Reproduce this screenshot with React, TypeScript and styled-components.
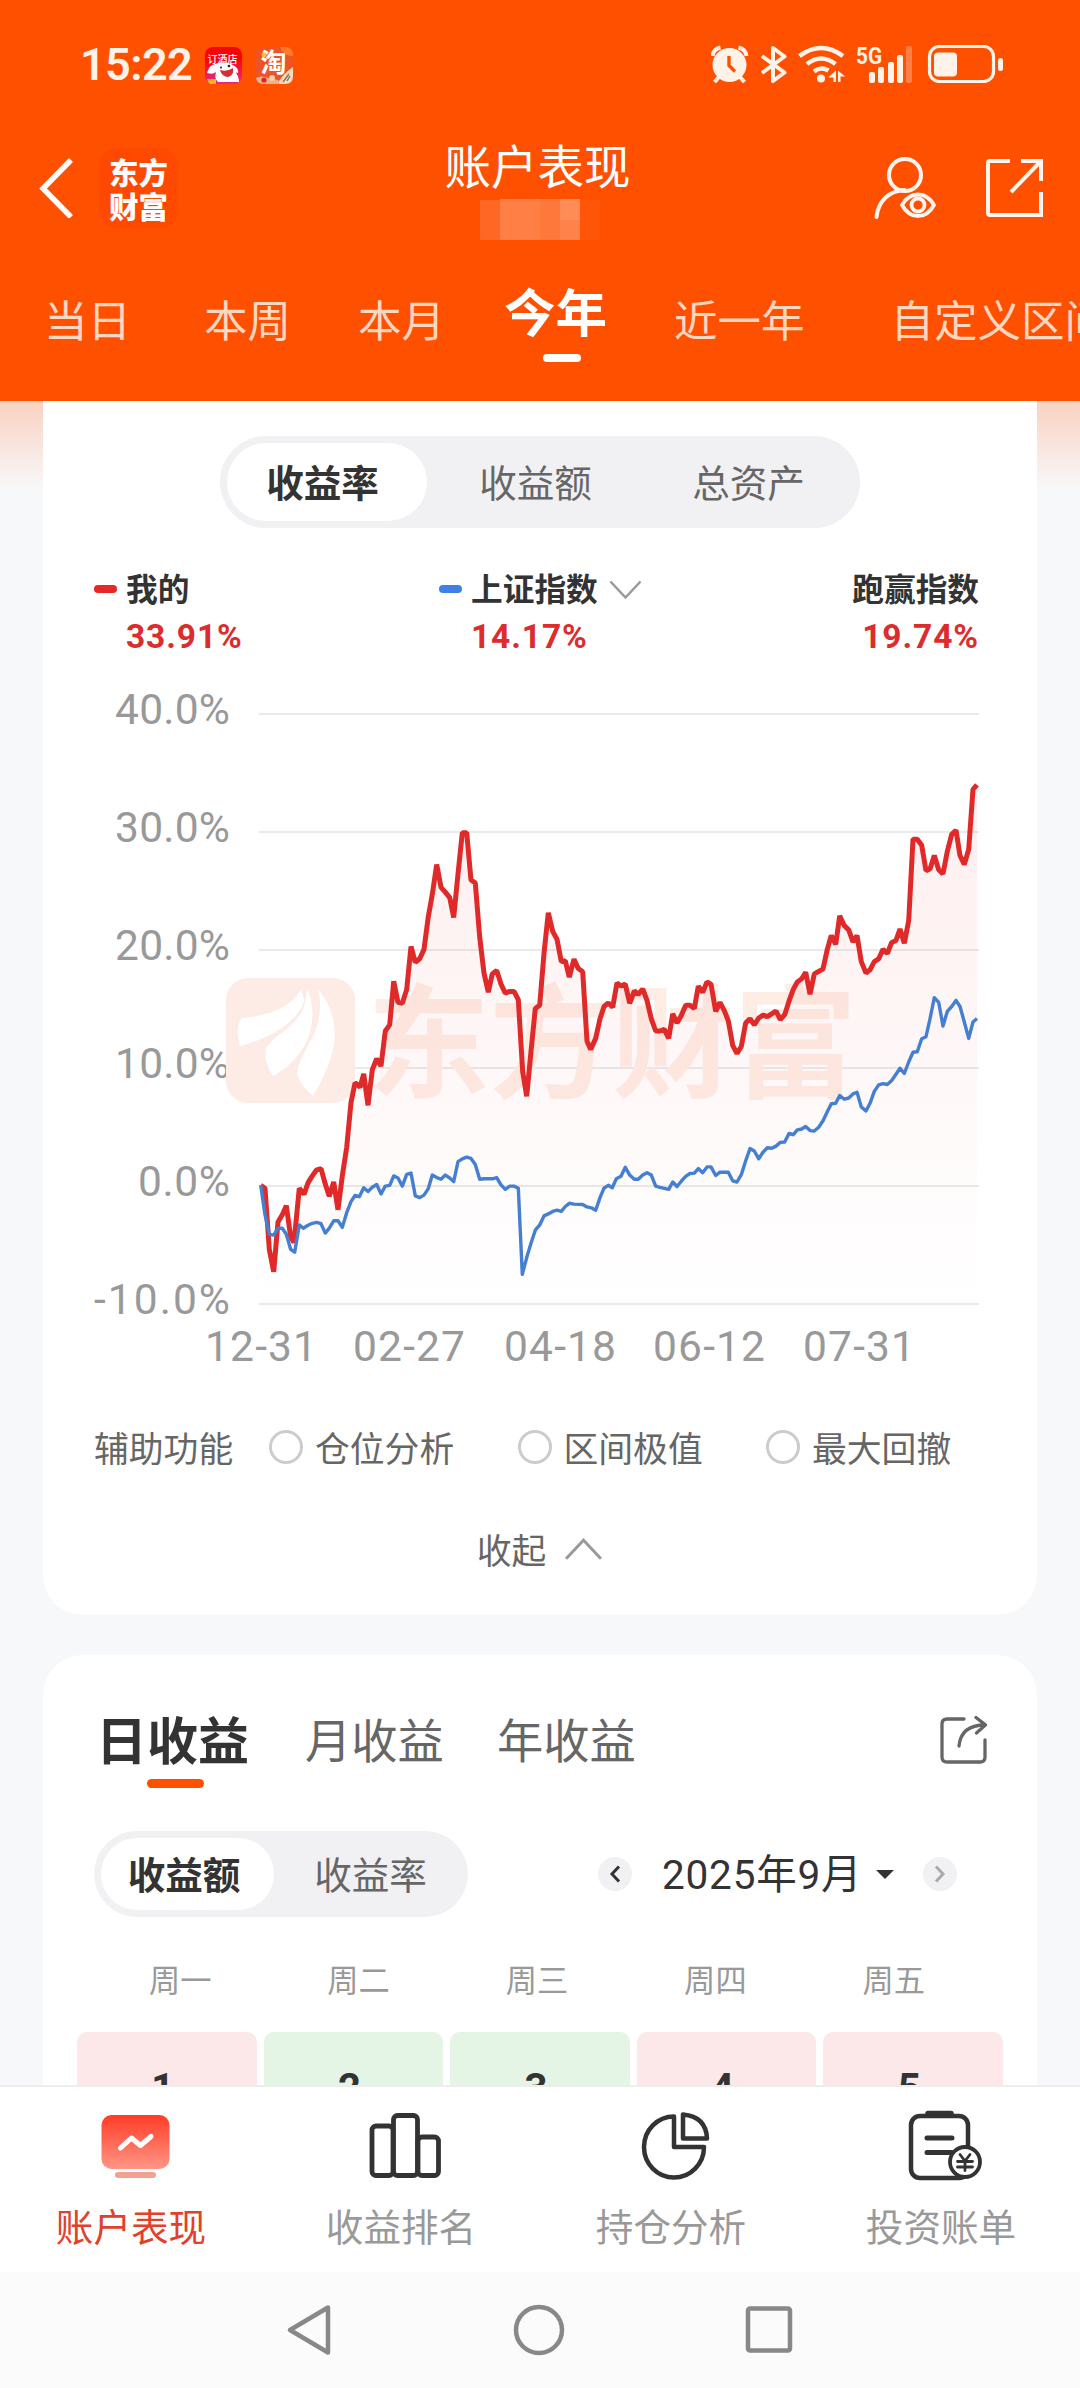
import React from "react";
import styled, { createGlobalStyle } from "styled-components";

const GlobalStyle = createGlobalStyle`
  body { margin: 0; background: #f7f8fa; }
  *, *::before, *::after { box-sizing: border-box; }
  svg { display: block; flex: none; }
`;

const cjk = `"Noto Sans CJK SC", sans-serif`;
const digits = `Roboto, "Noto Sans CJK SC", sans-serif`;

const Screen = styled.div`
  width: 1080px;
  height: 2388px;
  display: flex;
  flex-direction: column;
  overflow: hidden;
  background: #f7f8fa;
  font-family: ${cjk};
  color: #333;
  white-space: nowrap;
`;

/* ---------- header ---------- */

const Header = styled.header`
  flex: none;
  height: 401px;
  background: #ff5000;
  color: #fff;
`;

const StatusBar = styled.div`
  height: 108px;
  padding: 20px 77px 0 80px;
  display: flex;
  align-items: center;
  color: #fff2e8;
`;

const Clock = styled.span`
  width: 125px;
  padding-top: 2px;
  font: 600 45px/50px ${digits};
  letter-spacing: -0.6px;
`;

const AppBadges = styled.div`
  display: flex;
  gap: 14px;
  margin-top: 2px;
`;

const StatusIcons = styled.div`
  margin-left: auto;
  display: flex;
  align-items: center;
`;

const TitleBar = styled.div`
  height: 160px;
  padding: 0 36px;
  display: grid;
  grid-template-columns: 1fr auto 1fr;
  align-items: center;
`;

const TitleLeft = styled.div`
  padding-left: 3px;
  display: flex;
  align-items: center;
  gap: 26px;
`;

const BrandLogo = styled.div`
  width: 79px;
  height: 80px;
  border-radius: 18px;
  background: #ff4800;
  display: grid;
  place-content: center;
  font-size: 29.5px;
  font-weight: 900;
  line-height: 34px;
`;

const TitleCenter = styled.div`
  display: flex;
  flex-direction: column;
  align-items: center;
`;

const Title = styled.h1`
  margin: 0;
  padding: 0 5px 7px 0;
  font-size: 46.5px;
  font-weight: 400;
  line-height: 55px;
`;

const TitleRight = styled.div`
  display: flex;
  justify-content: flex-end;
  align-items: center;
  gap: 50px;
`;

const PeriodTabs = styled.nav`
  height: 133px;
  padding-left: 44px;
  display: flex;
  align-items: flex-start;
  overflow: hidden;
`;

const PeriodTab = styled.div<{ $gap: number; $active?: boolean }>`
  flex: none;
  margin-left: ${(p) => p.$gap}px;
  padding-top: ${(p) => (p.$active ? 10 : 19)}px;
  display: flex;
  flex-direction: column;
  align-items: center;
  color: ${(p) => (p.$active ? "#fff" : "#ffd6c0")};
  font-size: ${(p) => (p.$active ? 51.5 : 43.5)}px;
  font-weight: ${(p) => (p.$active ? 700 : 400)};
  line-height: 64px;
  &::after {
    content: "";
    display: ${(p) => (p.$active ? "block" : "none")};
    width: 38px;
    height: 8px;
    margin: 12px 0 0 12px;
    border-radius: 4px;
    background: #fff;
  }
`;

/* ---------- scrolling content ---------- */

const Content = styled.main`
  flex: 1;
  min-height: 0;
  overflow: hidden;
  padding: 0 43px;
  background: linear-gradient(#fad1c0, #f7f8fa 88px);
`;

const Card = styled.section<{ $top?: boolean }>`
  background: #fff;
  border-radius: ${(p) => (p.$top ? "0 0 40px 40px" : "40px 40px 0 0")};
  height: ${(p) => (p.$top ? "1214px" : "700px")};
  margin-bottom: 40px;
  overflow: hidden;
`;

const Segmented = styled.div<{ $w: number; $h: number }>`
  width: ${(p) => p.$w}px;
  height: ${(p) => p.$h}px;
  padding: 7px;
  border-radius: 46px;
  background: #f1f1f4;
  display: flex;
`;

const Segment = styled.div<{ $w: number; $shift: number; $active?: boolean }>`
  width: ${(p) => p.$w}px;
  padding: 0 ${(p) => Math.max(0, p.$shift)}px 3px ${(p) => Math.max(0, -p.$shift)}px;
  border-radius: 40px;
  display: flex;
  align-items: center;
  justify-content: center;
  font-size: 37.6px;
  font-weight: ${(p) => (p.$active ? 700 : 400)};
  color: ${(p) => (p.$active ? "#333" : "#666")};
  background: ${(p) => (p.$active ? "#fff" : "none")};
`;

const ChartSwitch = styled.div`
  padding-top: 35px;
  display: flex;
  justify-content: center;
`;

const Legend = styled.div`
  height: 99px;
  margin-top: 37px;
  padding: 0 58px 0 51px;
  display: flex;
`;

const LegendItem = styled.div<{ $w?: number; $end?: boolean }>`
  width: ${(p) => (p.$w ? p.$w + "px" : "auto")};
  margin-left: ${(p) => (p.$end ? "auto" : 0)};
  display: flex;
  flex-direction: column;
  align-items: ${(p) => (p.$end ? "flex-end" : "flex-start")};
`;

const LegendName = styled.div`
  height: 46px;
  padding-bottom: 2px;
  display: flex;
  align-items: center;
  font-size: 31.7px;
  font-weight: 700;
  svg {
    margin: 6px 0 0 11px;
  }
`;

const Marker = styled.i<{ $color: string }>`
  width: 23px;
  height: 8px;
  margin: 3px 9px 0 0;
  border-radius: 4px;
  background: ${(p) => p.$color};
`;

const LegendValue = styled.div<{ $indent?: boolean }>`
  margin-left: ${(p) => (p.$indent ? 32 : 0)}px;
  height: 46px;
  font: 700 33.5px/52px ${digits};
  letter-spacing: 0.9px;
  color: #dd2c2c;
`;

const Helpers = styled.div`
  height: 60px;
  padding-left: 51px;
  margin-top: 34px;
  display: flex;
  align-items: center;
  font-size: 34.8px;
  color: #666;
`;

const HelperLabel = styled.span`
  width: 175px;
`;

const HelperOption = styled.label`
  width: 248.5px;
  display: flex;
  align-items: center;
  gap: 12px;
  &::before {
    content: "";
    width: 34px;
    height: 34px;
    border: 3px solid #ccc;
    border-radius: 50%;
  }
`;

const Collapse = styled.div`
  margin-top: 42px;
  height: 60px;
  display: flex;
  justify-content: center;
  align-items: center;
  gap: 18px;
  font-size: 34.8px;
  color: #666;
`;

/* ---------- profit calendar ---------- */

const ProfitTabs = styled.div`
  height: 176px;
  padding: 53px 50px 0 53px;
  display: flex;
`;

const ProfitTab = styled.div<{ $gap: number; $active?: boolean }>`
  margin-left: ${(p) => p.$gap}px;
  display: flex;
  flex-direction: column;
  align-items: center;
  font-size: ${(p) => (p.$active ? 51 : 46.3)}px;
  font-weight: ${(p) => (p.$active ? 700 : 400)};
  color: ${(p) => (p.$active ? "#333" : "#666")};
  line-height: 60px;
  &::after {
    content: "";
    display: ${(p) => (p.$active ? "block" : "none")};
    width: 57px;
    height: 9px;
    margin: 11px 0 0 6px;
    border-radius: 5px;
    background: #ff5000;
  }
`;

const ShareSlot = styled.div`
  margin: 8px 0 0 auto;
`;

const CalendarBar = styled.div`
  height: 86px;
  padding: 0 80px 0 51px;
  display: flex;
  align-items: center;
`;

const MonthPicker = styled.div`
  margin-left: auto;
  display: flex;
  align-items: center;
`;

const RoundButton = styled.div`
  width: 34px;
  height: 34px;
  border-radius: 50%;
  background: #f1f1f4;
  display: grid;
  place-items: center;
`;

const Month = styled.div`
  width: 214px;
  margin-left: 30px;
  padding-top: 2px;
  font: 400 40.5px/56px ${digits};
  letter-spacing: 0.8px;
`;

const Caret = styled.i`
  border: 9px solid transparent;
  border-top: 9px solid #333;
  border-bottom: 0;
  margin-right: 29px;
`;

const Weekdays = styled.div`
  height: 115px;
  padding: 7px 54px 0 48px;
  display: grid;
  grid-template-columns: repeat(5, 1fr);
  align-items: center;
  justify-items: center;
  font-size: 31.3px;
  color: #999;
`;

const Days = styled.div`
  padding: 0 34px;
  display: grid;
  grid-template-columns: repeat(5, 1fr);
  gap: 7px;
`;

const Day = styled.div<{ $gain: boolean }>`
  height: 180px;
  padding: 32px 8px 0 0;
  border-radius: 10px;
  background: ${(p) => (p.$gain ? "#fce8e8" : "#e4f4e5")};
  font: 700 40px/50px ${digits};
  text-align: center;
`;

/* ---------- bottom bars ---------- */

const BottomNav = styled.nav`
  flex: none;
  height: 187px;
  border-top: 2px solid #ededef;
  background: #fff;
  display: grid;
  grid-template-columns: repeat(4, 1fr);
`;

const NavItem = styled.div<{ $active?: boolean }>`
  padding-top: 22px;
  display: flex;
  flex-direction: column;
  align-items: center;
  color: ${(p) => (p.$active ? "#e2402b" : "#999")};
  font-size: 37.6px;
  line-height: 50px;
  span {
    margin: 19px 8px 0 0;
  }
`;

const SystemBar = styled.div`
  flex: none;
  height: 116px;
  padding-right: 2px;
  background: #fbfbfb;
  display: flex;
  align-items: center;
  justify-content: center;
  gap: 180px;
`;

/* ---------- drawings ---------- */

const HotelAppIcon = () => (
  <svg width="37" height="37" viewBox="0 0 37 37">
    <defs>
      <linearGradient id="hotel" x1="0" y1="0" x2="0" y2="1">
        <stop offset="0.3" stopColor="#fb0207" />
        <stop offset="1" stopColor="#e62a8c" />
      </linearGradient>
    </defs>
    <rect width="37" height="37" rx="8" fill="url(#hotel)" />
    <path d="M2 26q2-8 8-9 10-4 18 1 6 3 5 8-3 0-4-3 5 6 5 12H13q-4-4-2-10-3 3-9 1z" fill="#fff" />
    <path d="M15 23q7 2 13-2 1 8-5 9-6 0-8-7z" fill="#d82b35" />
    <circle cx="16" cy="20.500" r="1" fill="#222" />
    <circle cx="24" cy="19" r="1.300" fill="#222" />
    <path d="M2 32h9v5H5q-2-1-3-5z" fill="#ffb51c" />
    <text x="2.500" y="16" fontSize="10" fontWeight="500" fill="#fff" fontFamily={cjk}>订酒店</text>
  </svg>
);

const TaoAppIcon = () => (
  <svg width="37" height="37" viewBox="0 0 37 37">
    <rect width="37" height="37" rx="8" fill="#ee5327" />
    <path d="M24 0h5q8 0 8 8v1q-10 0-13-9z" fill="#ff7a2b" />
    <path d="M37 20v9q0 8-8 8h-8q6-10 16-17z" fill="#f6dcc0" />
    <path d="M0 31q5-3 12 0l10 2 2 4H8q-7 0-8-6z" fill="#e8b28c" />
    <circle cx="8" cy="33" r="2.600" fill="#e0232c" />
    <circle cx="16" cy="31" r="3" fill="#f4cfa8" />
    <path d="M27 35l6-8M31 34l3-5" stroke="#8a7060" strokeWidth="1.400" />
    <text x="4.500" y="25" fontSize="26" fontWeight="700" fill="#fff" fontFamily={cjk}>淘</text>
    <circle cx="8" cy="8" r="2.400" fill="#ffc53a" />
  </svg>
);

const StatusGlyphs = () => (
  <svg width="292" height="38" viewBox="711 45 292 38" fill="#fff2e8">
    <circle cx="729.500" cy="65" r="17" />
    <path d="M712.500 56q1-7 8-8.500M746.500 56q-1-7-8-8.500" fill="none" stroke="#fff2e8" strokeWidth="4" />
    <path d="M719 77l-4.500 5M740 77l4.500 5" stroke="#fff2e8" strokeWidth="4" />
    <path d="M729 56v9.500l6 6" fill="none" stroke="#ff5000" strokeWidth="3.400" />
    <path d="M762 56l22.500 16.500-11.500 8.500V48l11.500 8.500L762 73" fill="none" stroke="#fff2e8" strokeWidth="4" strokeLinejoin="round" />
    <path d="M799.500 56q21.500-16 43.500 0M807 64q14-11 28.500 0M814 71.500q7-5.500 14.500-1" fill="none" stroke="#fff2e8" strokeWidth="4.600" />
    <circle cx="821" cy="78.500" r="4" />
    <path d="M836 70.500v11.500h-2.500v-4.500h-5.500zM838 82V70.500l7 6h-4.500V82z" />
    <text x="856" y="64" fontSize="23.500" fontWeight="700" textLength="26" lengthAdjust="spacingAndGlyphs" fontFamily="Roboto, sans-serif">5G</text>
    <rect x="869" y="72" width="6" height="11" rx="2" />
    <rect x="878" y="67" width="6" height="16" rx="2" />
    <rect x="888" y="62" width="6" height="21" rx="2" />
    <rect x="897" y="55" width="6" height="28" rx="2" />
    <rect x="906" y="46" width="6" height="37" rx="2" opacity="0.3" />
    <rect x="929.500" y="46.500" width="64" height="35" rx="10" fill="none" stroke="#fff2e8" strokeWidth="3.200" />
    <rect x="934" y="52.500" width="23" height="24" rx="4" />
    <rect x="998" y="58" width="5" height="13" rx="2.500" />
  </svg>
);

const BackIcon = () => (
  <svg width="34" height="60" viewBox="0 0 34 60" fill="none" stroke="#fff" strokeWidth="5.500">
    <path d="M32 2L4 30.500 32 59" />
  </svg>
);

const Mosaic = () => (
  <svg width="120" height="42" viewBox="480 198 120 42" fill="#fff">
    <path d="M480 200h20v40h-20z" opacity="0.14" />
    <path d="M500 199h40v41h-40z" opacity="0.27" />
    <path d="M540 199h20v41h-20z" opacity="0.23" />
    <path d="M560 199h20v21h-20z" opacity="0.34" />
    <path d="M560 220h20v20h-20z" opacity="0.29" />
    <path d="M580 200h20v40h-20z" opacity="0.03" />
  </svg>
);

const PersonEyeIcon = () => (
  <svg width="62" height="62" viewBox="873 157 62 62" fill="none" stroke="#fff5ee" strokeWidth="4">
    <circle cx="904" cy="175" r="16" />
    <path d="M875.500 217c2-17 13-26 28-27" strokeLinecap="round" />
    <path d="M901 205q6-10.500 16-10.500t16 10.500q-6 11-16 11t-16-11z" strokeWidth="3.800" strokeLinejoin="round" />
    <circle cx="917" cy="205" r="6.500" strokeWidth="3.800" />
  </svg>
);

const HeaderShareIcon = () => (
  <svg width="58" height="60" viewBox="987 158 58 60" fill="none" stroke="#fff5ee" strokeWidth="4">
    <path d="M1011 161h-20q-2 0-2 2v50q0 2 2 2h51v-23M1022 161h20v20M1041 162l-29 30" />
  </svg>
);

const Chevron = ({ up, w }: { up?: boolean; w: number }) => (
  <svg width={w} height={w / 2 + 3} viewBox="0 0 34 20" fill="none" stroke="#999" strokeWidth="2.600">
    <path d={up ? "M1.500 18.500L17 2l15.500 16.500" : "M1.500 1.500L17 18 32.500 1.500"} />
  </svg>
);

const CardShareIcon = () => (
  <svg width="47" height="48" viewBox="940 1717 47 48" fill="none" stroke="#666" strokeWidth="3.300" strokeLinecap="round">
    <path d="M964 1720h-17q-5 0-5 5v33q0 5 5 5h33q5 0 5-5v-17" />
    <path d="M959 1747q2-21 26-21M976 1718.500l9.500 7.500-9 8" />
  </svg>
);

const Arrow = ({ dir, color }: { dir: "left" | "right"; color: string }) => (
  <svg width="12" height="18" viewBox="0 0 12 18" fill="none" stroke={color} strokeWidth="3">
    <path d={dir === "left" ? "M10 1.500L3 9l7 7.500" : "M2 1.500L9 9l-7 7.500"} />
  </svg>
);

const PerformanceIcon = () => (
  <svg width="76" height="72" viewBox="97 2109 76 72">
    <defs>
      <linearGradient id="perf" x1="0" y1="0" x2="0" y2="1">
        <stop offset="0" stopColor="#ff3c26" />
        <stop offset="1" stopColor="#ff9686" />
      </linearGradient>
    </defs>
    <rect x="101.500" y="2115" width="68" height="54" rx="10" fill="url(#perf)" />
    <path d="M120.500 2148l11-10 9 7.500 10.500-9" fill="none" stroke="#fff" strokeWidth="5" strokeLinecap="round" strokeLinejoin="round" />
    <rect x="115" y="2172" width="41" height="6" rx="3" fill="#f2a094" />
  </svg>
);

const RankIcon = () => (
  <svg width="76" height="72" viewBox="367 2109 76 72" fill="none" stroke="#333" strokeWidth="4.800">
    <rect x="372" y="2126" width="21" height="49.500" rx="4" />
    <rect x="393.500" y="2115.500" width="24" height="60" rx="4" />
    <rect x="418" y="2137" width="20.500" height="38.500" rx="4" />
  </svg>
);

const PieIcon = () => (
  <svg width="76" height="72" viewBox="637 2109 76 72" fill="none" stroke="#333" strokeWidth="4.500" strokeLinejoin="round">
    <path d="M674 2116.500a30 30.500 0 1 0 30 30.500h-30z" />
    <path d="M683 2114.500v24h24q-1-22-24-24z" />
  </svg>
);

const BillIcon = () => (
  <svg width="76" height="72" viewBox="908 2110 76 72" fill="none" stroke="#333" strokeWidth="4.500" strokeLinecap="round">
    <rect x="912" y="2117" width="57" height="62" rx="9" />
    <path d="M929 2114.500h23" strokeWidth="5.500" />
    <path d="M928 2139h25M928 2153.500h25" strokeWidth="5" />
    <circle cx="966" cy="2163" r="15" fill="#fff" strokeWidth="3.800" />
    <path d="M961 2155.500l5 6.500 5-6.500M966 2162v9.500M958.500 2162.500h15M958.500 2168h15" strokeWidth="2.800" />
  </svg>
);

/* ---------- chart ---------- */

/* Plot units: t runs 122..2271, v runs 83 (40%) .. 1529 (-10%). */
const mine = `122,1238 135,1245 148,1395 161,1450 174,1328 187,1310 199,1288 212,1365 222,1378 238,1245 252,1260
264,1232 277,1215 290,1200 303,1197 316,1235 328,1265 341,1230 354,1298 367,1215 380,1145 393,1035 405,987 412,990
420,998 431,965 444,1042 457,955 470,928 483,946 496,860 509,845 521,738 534,790 547,792 560,758 573,653 586,692
599,683 612,660 625,580 637,525 650,452 663,508 676,520 689,533 701,582 714,475 727,374 740,374 753,490 766,497
779,630 792,718 805,765 817,720 830,712 843,745 856,767 869,763 882,763 895,783 908,960 920,1020 933,910 946,805
959,797 972,670 985,570 998,616 1011,635 1024,690 1036,688 1048,728 1062,684 1075,707 1088,715 1101,885 1112,905
1127,878 1140,830 1152,800 1165,791 1178,802 1191,742 1203,750 1216,745 1229,792 1243,762 1255,770 1268,757
1281,785 1294,830 1307,860 1320,860 1333,856 1346,878 1358,818 1371,840 1384,822 1397,797 1410,797 1423,805
1435,750 1448,765 1461,740 1473,745 1487,812 1500,790 1513,810 1525,835 1538,895 1551,915 1564,898 1577,840
1590,830 1603,845 1616,828 1629,821 1642,825 1655,818 1668,811 1681,832 1694,820 1707,787 1720,758 1732,740
1745,732 1757,716 1770,770 1783,720 1796,714 1809,708 1822,660 1834,626 1847,648 1859,578 1873,602 1886,612
1899,642 1911,626 1924,690 1938,718 1950,710 1963,690 1976,683 1989,660 2002,670 2015,643 2028,638 2040,610
2053,645 2066,590 2079,390 2092,390 2105,405 2118,467 2130,463 2143,430 2156,465 2169,475 2182,420 2195,378
2208,368 2220,430 2233,452 2246,415 2259,268 2271,257`;

const index = `122,1238 135,1310 148,1358 161,1360 174,1343 187,1343 199,1358 212,1395 224,1402 238,1335 250,1343
264,1336 277,1331 290,1329 303,1332 316,1355 328,1343 341,1325 354,1325 367,1341 380,1305 393,1278 405,1263
418,1266 431,1244 444,1253 457,1243 470,1236 483,1259 496,1240 509,1238 521,1215 534,1220 547,1240 560,1211
573,1208 586,1264 599,1268 612,1262 625,1246 637,1213 650,1219 663,1223 676,1213 689,1220 701,1229 714,1180
727,1173 740,1169 753,1172 766,1187 779,1223 792,1222 817,1222 830,1219 843,1237 856,1248 869,1240 882,1240
895,1245 907,1456 920,1415 933,1380 946,1348 959,1335 972,1313 985,1308 998,1302 1011,1299 1024,1302 1036,1290
1048,1282 1062,1284 1088,1285 1101,1291 1114,1293 1127,1299 1140,1268 1152,1245 1165,1238 1177,1244 1189,1222
1203,1216 1216,1194 1229,1213 1243,1223 1255,1223 1268,1213 1281,1207 1294,1213 1307,1240 1320,1243 1346,1248
1358,1230 1371,1241 1384,1228 1397,1216 1410,1209 1423,1208 1435,1197 1448,1207 1461,1193 1473,1193 1487,1214
1500,1206 1525,1206 1538,1227 1551,1230 1564,1212 1577,1178 1590,1148 1603,1154 1616,1173 1629,1157 1642,1146
1655,1147 1668,1142 1681,1133 1694,1132 1707,1111 1720,1114 1732,1102 1745,1100 1757,1094 1770,1104 1783,1105
1796,1096 1809,1080 1822,1058 1834,1038 1847,1037 1859,1018 1873,1027 1886,1024 1899,1014 1911,1010 1924,1046
1938,1056 1950,1037 1963,1008 1976,992 1989,989 2002,991 2015,981 2028,966 2040,951 2053,964 2066,936 2079,912
2092,911 2105,879 2118,874 2130,830 2143,778 2156,790 2169,848 2182,812 2195,800 2208,785 2220,800 2233,838
2246,878 2259,838 2271,829`;

const toLine = (series: string) =>
  "M" +
  series
    .trim()
    .split(/\s+/)
    .map((pair) => {
      const [t, v] = pair.split(",").map(Number);
      return `${(220 + t / 3).toFixed(1)} ${(680 + v / 2.45).toFixed(1)}`;
    })
    .join("L");

const yTicks = [
  { label: "40.0%", x: 115, y: 714 },
  { label: "30.0%", x: 115, y: 832 },
  { label: "20.0%", x: 115, y: 950 },
  { label: "10.0%", x: 115, y: 1068 },
  { label: "0.0%", x: 138, y: 1186 },
  { label: "-10.0%", x: 94, y: 1304 },
];

const xTicks = [
  { label: "12-31", x: 205 },
  { label: "02-27", x: 353 },
  { label: "04-18", x: 504 },
  { label: "06-12", x: 653 },
  { label: "07-31", x: 803 },
];

const Chart = () => (
  <svg width="994" height="719" viewBox="43 664 994 719">
    <defs>
      <linearGradient id="area" x1="0" y1="786" x2="0" y2="1304" gradientUnits="userSpaceOnUse">
        <stop offset="0" stopColor="#f03030" stopOpacity="0.08" />
        <stop offset="1" stopColor="#f03030" stopOpacity="0" />
      </linearGradient>
    </defs>
    {yTicks.map((t) => (
      <g key={t.label}>
        <path d={`M258.500 ${t.y}H979`} stroke="#e8eaeb" strokeWidth="2" />
        <text x={t.x} y={t.y + 9.5} fontSize="42.500" fill="#999" fontFamily={digits} textLength={230 - t.x}>
          {t.label}
        </text>
      </g>
    ))}
    {xTicks.map((t) => (
      <text key={t.label} x={t.x} y="1361" fontSize="42.500" fill="#999" fontFamily={digits} textLength="112">
        {t.label}
      </text>
    ))}
    <rect x="226" y="978" width="129" height="125" rx="22" fill="#fdebe5" />
    <path
      d="M301 989C292 1007 268 1016 242 1018 236 1024 238 1038 240 1046 272 1038 300 1020 304 1000zM306 994C306 1024 276 1032 266 1048 264 1058 268 1068 273 1076 300 1062 322 1030 308 990zM318 989C328 1030 300 1048 297 1074 300 1084 306 1090 313 1096 332 1064 348 1026 318 989z"
      fill="#fff"
    />
    <text x="367" y="1088" fontSize="123" fontWeight="700" fill="#fdede5" fontFamily={cjk} textLength="490">
      东方财富
    </text>
    <path d={toLine(mine) + "L977 1304L260.700 1304Z"} fill="url(#area)" />
    <path d={toLine(mine)} fill="none" stroke="#e02a2a" strokeWidth="5" strokeLinejoin="bevel" />
    <path d={toLine(index)} fill="none" stroke="#457fd2" strokeWidth="3.400" strokeLinejoin="round" />
  </svg>
);

/* ---------- page ---------- */

const periods = [
  { name: "当日", gap: 0 },
  { name: "本周", gap: 73 },
  { name: "本月", gap: 67 },
  { name: "今年", gap: 59, active: true },
  { name: "近一年", gap: 67 },
  { name: "自定义区间", gap: 86 },
];

const days = [
  { day: 1, gain: true },
  { day: 2, gain: false },
  { day: 3, gain: false },
  { day: 4, gain: true },
  { day: 5, gain: true },
];

export default function App() {
  return (
    <Screen>
      <GlobalStyle />
      <Header>
        <StatusBar>
          <Clock>15:22</Clock>
          <AppBadges>
            <HotelAppIcon />
            <TaoAppIcon />
          </AppBadges>
          <StatusIcons>
            <StatusGlyphs />
          </StatusIcons>
        </StatusBar>
        <TitleBar>
          <TitleLeft>
            <BackIcon />
            <BrandLogo>
              <div>东方</div>
              <div>财富</div>
            </BrandLogo>
          </TitleLeft>
          <TitleCenter>
            <Title>账户表现</Title>
            <Mosaic />
          </TitleCenter>
          <TitleRight>
            <PersonEyeIcon />
            <HeaderShareIcon />
          </TitleRight>
        </TitleBar>
        <PeriodTabs>
          {periods.map((p) => (
            <PeriodTab key={p.name} $gap={p.gap} $active={p.active}>
              {p.name}
            </PeriodTab>
          ))}
        </PeriodTabs>
      </Header>

      <Content>
        <Card $top>
          <ChartSwitch>
            <Segmented $w={640} $h={92}>
              <Segment $w={200} $shift={9} $active>收益率</Segment>
              <Segment $w={226} $shift={9}>收益额</Segment>
              <Segment $w={200} $shift={9}>总资产</Segment>
            </Segmented>
          </ChartSwitch>
          <Legend>
            <LegendItem $w={345}>
              <LegendName>
                <Marker $color="#e62828" />
                我的
              </LegendName>
              <LegendValue $indent>33.91%</LegendValue>
            </LegendItem>
            <LegendItem>
              <LegendName>
                <Marker $color="#3f7fe6" />
                上证指数
                <Chevron w={33} />
              </LegendName>
              <LegendValue $indent>14.17%</LegendValue>
            </LegendItem>
            <LegendItem $end>
              <LegendName>跑赢指数</LegendName>
              <LegendValue>19.74%</LegendValue>
            </LegendItem>
          </Legend>
          <Chart />
          <Helpers>
            <HelperLabel>辅助功能</HelperLabel>
            <HelperOption>仓位分析</HelperOption>
            <HelperOption>区间极值</HelperOption>
            <HelperOption>最大回撤</HelperOption>
          </Helpers>
          <Collapse>
            收起
            <Chevron up w={39} />
          </Collapse>
        </Card>

        <Card>
          <ProfitTabs>
            <ProfitTab $gap={0} $active>日收益</ProfitTab>
            <ProfitTab $gap={56}>月收益</ProfitTab>
            <ProfitTab $gap={53}>年收益</ProfitTab>
            <ShareSlot>
              <CardShareIcon />
            </ShareSlot>
          </ProfitTabs>
          <CalendarBar>
            <Segmented $w={374} $h={86}>
              <Segment $w={173} $shift={7} $active>收益额</Segment>
              <Segment $w={187} $shift={-6}>收益率</Segment>
            </Segmented>
            <MonthPicker>
              <RoundButton>
                <Arrow dir="left" color="#333" />
              </RoundButton>
              <Month>2025年9月</Month>
              <Caret />
              <RoundButton>
                <Arrow dir="right" color="#aaa" />
              </RoundButton>
            </MonthPicker>
          </CalendarBar>
          <Weekdays>
            <span>周一</span>
            <span>周二</span>
            <span>周三</span>
            <span>周四</span>
            <span>周五</span>
          </Weekdays>
          <Days>
            {days.map((d) => (
              <Day key={d.day} $gain={d.gain}>
                {d.day}
              </Day>
            ))}
          </Days>
        </Card>
      </Content>

      <BottomNav>
        <NavItem $active>
          <PerformanceIcon />
          <span>账户表现</span>
        </NavItem>
        <NavItem>
          <RankIcon />
          <span>收益排名</span>
        </NavItem>
        <NavItem>
          <PieIcon />
          <span>持仓分析</span>
        </NavItem>
        <NavItem>
          <BillIcon />
          <span>投资账单</span>
        </NavItem>
      </BottomNav>

      <SystemBar>
        <svg width="48" height="52" viewBox="0 0 48 52" fill="none" stroke="#888" strokeWidth="4.500" strokeLinejoin="round">
          <path d="M43 3.500v45L5 26z" />
        </svg>
        <svg width="52" height="52" viewBox="0 0 52 52" fill="none" stroke="#888" strokeWidth="4.500">
          <circle cx="26" cy="26" r="23" />
        </svg>
        <svg width="48" height="52" viewBox="0 0 48 52" fill="none" stroke="#888" strokeWidth="4.500">
          <rect x="3" y="4.500" width="42" height="42" rx="2" />
        </svg>
      </SystemBar>
    </Screen>
  );
}
